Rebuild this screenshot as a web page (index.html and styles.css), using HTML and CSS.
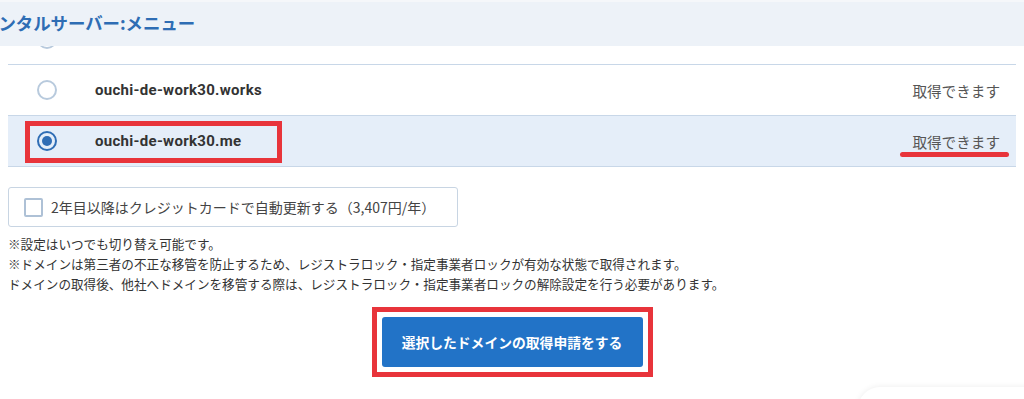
FILE: index.html
```html
<!DOCTYPE html>
<html lang="ja">
<head>
  <meta charset="UTF-8">
  <title>ドメイン取得</title>
  <link rel="stylesheet" href="styles.css">
</head>
<body>

<header class="menu-bar">
  <h2>レンタルサーバー:メニュー</h2>
</header>

<div class="page">
  <ul class="domain-list">
    <!-- row scrolled under the menu bar -->
    <li class="domain-row">
      <span class="radio"></span>
    </li>
    <li class="domain-row">
      <span class="radio"></span>
      <span class="domain-name">ouchi-de-work30.works</span>
      <span class="status">取得できます</span>
    </li>
    <li class="domain-row selected">
      <span class="radio"></span>
      <span class="domain-name">ouchi-de-work30.me</span>
      <span class="status">取得できます</span>
      <!-- annotation marks -->
      <span class="mark-box"></span>
      <span class="mark-line"></span>
    </li>
  </ul>

  <label class="auto-renew">
    <span class="checkbox"></span>
    2年目以降はクレジットカードで自動更新する（3,407円/年）
  </label>

  <div class="notes">
    <p>※設定はいつでも切り替え可能です。</p>
    <p>※ドメインは第三者の不正な移管を防止するため、レジストラロック・指定事業者ロックが有効な状態で取得されます。</p>
    <p>ドメインの取得後、他社へドメインを移管する際は、レジストラロック・指定事業者ロックの解除設定を行う必要があります。</p>
  </div>

  <div class="submit-wrap">
    <div class="mark-frame">
      <button class="submit-btn">選択したドメインの取得申請をする</button>
    </div>
  </div>
</div>

<div class="chat-widget"></div>

</body>
</html>
```

FILE: styles.css
```css
body {
  font-family: Roboto, "Noto Sans CJK JP", sans-serif;
  background-color: #fff;
  color: #333;
  margin: 0;
  overflow: hidden;
}
.menu-bar {
  position: fixed;
  top: 0;
  left: 0;
  right: 0;
  height: 44px;
  background-color: #edf2f8;
  border-top: 2px solid #f5f7fa;
  overflow: hidden;
  z-index: 2;
}
.menu-bar h2 {
  margin: 0 0 0 -19px;
  font-family: "Noto Sans CJK JP", sans-serif;
  font-size: 17.4px;
  line-height: 42px;
  font-weight: bold;
  color: #2e6db4;
}
.page {
  padding: 0 8px;
}
.domain-list {
  list-style: none;
  margin: 14px 0 0;
  padding: 0;
}
.domain-row {
  position: relative;
  display: flex;
  align-items: center;
  height: 50px;
  padding: 0 16px 0 29px;
  border-bottom: 1px solid #c8d7e8;
}
.domain-row.selected {
  background-color: #e5eef9;
}
.radio {
  width: 16px;
  height: 16px;
  border: 2px solid #b8cadd;
  border-radius: 50%;
  margin-right: 38px;
  box-sizing: content-box;
  display: flex;
  align-items: center;
  justify-content: center;
}
.selected .radio {
  border-color: #2f6db5;
}
.selected .radio::after {
  content: "";
  width: 10px;
  height: 10px;
  border-radius: 50%;
  background-color: #2f6db5;
}
.domain-name {
  font-weight: bold;
  font-size: 15px;
  letter-spacing: 0.3px;
  color: #333;
  flex: 1;
}
.status {
  font-family: "Noto Sans CJK JP", sans-serif;
  font-size: 14.6px;
  color: #555;
}
.mark-box {
  position: absolute;
  left: 17px;
  top: 5px;
  width: 257px;
  height: 42px;
  border: 5px solid #e8343b;
  box-sizing: border-box;
}
.mark-line {
  position: absolute;
  left: 892px;
  top: 36px;
  width: 109px;
  height: 5px;
  border-radius: 3px;
  background-color: #e8343b;
}
.auto-renew {
  display: flex;
  align-items: center;
  width: 450px;
  height: 40px;
  box-sizing: border-box;
  margin-top: 20px;
  padding-left: 15px;
  border: 1px solid #c8d5e3;
  border-radius: 3px;
  font-family: "Noto Sans CJK JP", sans-serif;
  font-size: 14px;
  color: #444;
}
.checkbox {
  width: 15px;
  height: 15px;
  border: 2px solid #aec1d6;
  border-radius: 2px;
  margin-right: 8px;
  box-sizing: content-box;
}
.notes {
  margin-top: 7px;
  font-family: "Noto Sans CJK JP", sans-serif;
  font-size: 12.6px;
  line-height: 20px;
  color: #333;
}
.notes p {
  margin: 0;
}
.submit-wrap {
  display: flex;
  justify-content: center;
  margin-top: 13px;
}
.mark-frame {
  border: 5px solid #e8343b;
  padding: 5px;
}
.submit-btn {
  display: block;
  width: 261px;
  height: 50px;
  border: none;
  border-radius: 3px;
  background-color: #2273c7;
  color: #fff;
  font-family: "Noto Sans CJK JP", sans-serif;
  font-size: 13.8px;
  font-weight: bold;
  cursor: pointer;
}
.submit-btn:hover {
  background-color: #1b5fa8;
}
.chat-widget {
  position: fixed;
  left: 858px;
  top: 387px;
  width: 220px;
  height: 80px;
  background-color: #fff;
  border-radius: 22px;
  box-shadow: 0 0 6px rgba(0,0,0,0.08);
}
```
